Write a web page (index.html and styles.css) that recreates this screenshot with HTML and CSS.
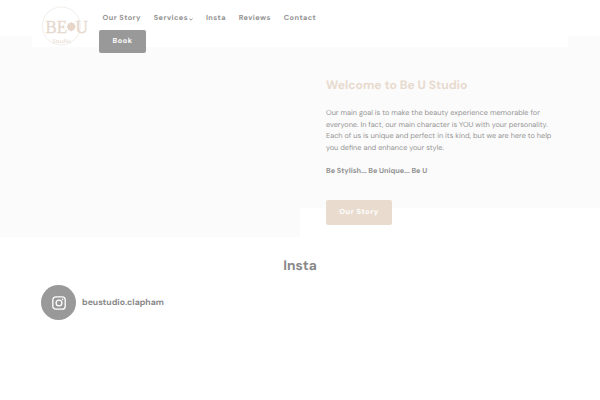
FILE: index.html
```html
<!DOCTYPE html>
<html lang="en">
<head>
    <meta charset="UTF-8">
    <meta name="viewport" content="width=device-width, initial-scale=1.0">
    <title>Be U Studio</title>
    <link rel="stylesheet" href="styles.css">
</head>
<body>
    <header class="header">
        <div class="header-inner">
            <a href="#" class="logo">
                <svg width="48" height="42" viewBox="0 0 48 42">
                    <circle cx="20.3" cy="20" r="19" fill="none" stroke="#eee9e4" stroke-width="0.8"/>
                    <text class="logo-name" x="4.5" y="26.5" textLength="21.5" lengthAdjust="spacingAndGlyphs">BE</text>
                    <text class="logo-name" x="34.5" y="26.5" textLength="12.5" lengthAdjust="spacingAndGlyphs">U</text>
                    <path d="M30.2 16l1.6 1.2 1.8.2.2 1.9 1 1.5-1.1 1.5-.3 1.8-1.8.2-1.4 1.1-1.5-1.1-1.8-.3-.1-1.8-1.1-1.4 1.1-1.6.2-1.8 1.8-.1z" fill="#e6d5c8"/>
                    <text class="logo-script" x="11" y="36.5" textLength="19" lengthAdjust="spacingAndGlyphs">Studio</text>
                </svg>
            </a>
            <nav class="nav">
                <a href="#">Our Story</a>
                <a href="#" class="link-services">Services
                    <svg width="4" height="3" viewBox="0 0 4 3"><path d="M.4.7L2 2.1 3.6.7" fill="none" stroke="#999" stroke-width="1"/></svg>
                </a>
                <a href="#">Insta</a>
                <a href="#">Reviews</a>
                <a href="#">Contact</a>
                <a href="#" class="btn btn-dark">Book</a>
            </nav>
        </div>
    </header>

    <section class="hero">
        <div class="hero-image"></div>
        <div class="hero-text">
            <h1>Welcome to Be U Studio</h1>
            <p class="intro">
                Our main goal is to make the beauty experience memorable for<br>
                everyone. In fact, our main character is YOU with your personality.<br>
                Each of us is unique and perfect in its kind, but we are here to help<br>
                you define and enhance your style.
            </p>
            <p class="slogan">Be Stylish... Be Unique... Be U</p>
            <a href="#" class="btn btn-light">Our Story</a>
        </div>
    </section>

    <section class="insta">
        <h2>Insta</h2>
        <a href="#" class="profile">
            <span class="profile-icon">
                <svg width="14" height="14" viewBox="0 0 14 14" fill="none" stroke="#fff" stroke-width="1.3">
                    <rect x="0.8" y="0.8" width="12.4" height="12.4" rx="3"/>
                    <circle cx="7" cy="7" r="2.9"/>
                    <circle cx="10.6" cy="3.4" r="0.8" fill="#fff" stroke="none"/>
                </svg>
            </span>
            <span class="profile-name">beustudio.clapham</span>
        </a>
    </section>
</body>
</html>
```
FILE: styles.css
```css
* {
    box-sizing: border-box;
}

body {
    margin: 0;
    background-color: #fff;
    color: #939393;
    font-family: "DM Sans", Inter, "Liberation Sans", sans-serif;
    text-rendering: geometricPrecision;
}

a {
    color: inherit;
    text-decoration: none;
}

h1, h2, p {
    margin: 0;
}

.header {
    position: relative;
    z-index: 1;
    height: 36px;
    background-color: #fff;
}

/* the inner bar hangs over the top of the hero */
.header-inner {
    display: flex;
    width: 536px;
    height: 47px;
    margin: 0 auto;
    padding: 6px 9px 0;
    background-color: #fff;
}

.logo {
    width: 58px;
    height: 42px;
}

.logo svg {
    display: block;
}

.logo-name {
    fill: #e6d8cd;
    stroke: #e6d8cd;
    stroke-width: 0.3px;
    font-family: "Liberation Serif", serif;
    font-size: 18.5px;
}

.logo-script {
    fill: #e6d8cd;
    font-family: "Liberation Serif", serif;
    font-size: 6px;
    font-style: italic;
}

.nav {
    display: flex;
    flex-wrap: wrap;
    align-content: flex-start;
    width: 240px;
    column-gap: 12.8px;
    row-gap: 5px;
    padding: 7px 0 0 3.5px;
    font-size: 7.33px;
    font-weight: 700;
    line-height: 12px;
    letter-spacing: 0.45px;
    white-space: nowrap;
}

.link-services {
    display: flex;
    align-items: center;
    gap: 1px;
}

.btn {
    display: block;
    border-radius: 2px;
    color: #fff;
    font-size: 7.33px;
    font-weight: 700;
    letter-spacing: 0.55px;
    text-align: center;
}

.btn-dark {
    width: 47px;
    height: 23px;
    margin-left: -3.5px;
    background-color: #999;
    line-height: 24px;
}

.btn-light {
    width: 66px;
    height: 25px;
    margin-top: 22px;
    background-color: #e9dccf;
    line-height: 26px;
}

.hero {
    display: grid;
    grid-template-columns: 300px 300px;
    height: 201px;
    background: linear-gradient(#fbfbfb, #fbfbfb) no-repeat 0 0 / 100% 172px;
}

.hero-image {
    background-color: #fbfbfb;
}

.hero-text {
    padding: 40px 0 0 26px;
    white-space: nowrap;
}

h1 {
    color: #e8dace;
    font-size: 12.1px;
    font-weight: 700;
    line-height: 18px;
}

.intro {
    margin-top: 14px;
    font-size: 7.33px;
    line-height: 11.7px;
}

.slogan {
    margin-top: 11px;
    font-size: 7.3px;
    font-weight: 700;
    line-height: 12px;
}

.insta h2 {
    margin-top: 20px;
    color: #888;
    font-size: 13.8px;
    font-weight: 700;
    line-height: 18px;
    text-align: center;
}

.profile {
    display: flex;
    align-items: center;
    gap: 6px;
    margin: 10px 0 0 41px;
}

.profile-icon {
    display: flex;
    align-items: center;
    justify-content: center;
    width: 35px;
    height: 35px;
    border-radius: 50%;
    background-color: #999;
}

.profile-name {
    color: #888;
    font-size: 8.65px;
    font-weight: 700;
    line-height: 11px;
}
```
